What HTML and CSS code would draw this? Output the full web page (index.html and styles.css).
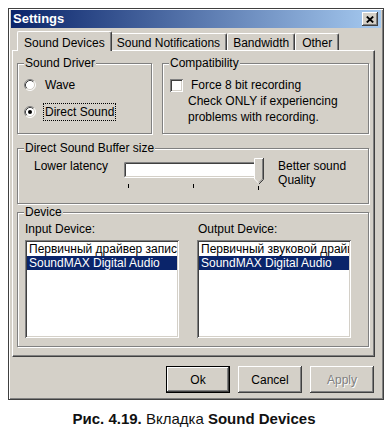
FILE: index.html
```html
<!DOCTYPE html>
<html>
<head>
<meta charset="utf-8">
<link rel="stylesheet" href="styles.css">
</head>
<body>
<div class="window">
  <div class="titlebar">
    <span class="title">Settings</span>
    <span class="close"><svg width="8" height="7" viewBox="0 0 8 7"><path d="M0.8 0.6L7.2 6.4M7.2 0.6L0.8 6.4" stroke="#000" stroke-width="1.9" fill="none"/></svg></span>
  </div>
  <div class="tabs">
    <div class="tab active">Sound Devices</div>
    <div class="tab">Sound Notifications</div>
    <div class="tab bw">Bandwidth</div>
    <div class="tab">Other</div>
  </div>
  <div class="panel">
    <div class="row1">
      <fieldset class="group driver">
        <legend>Sound Driver</legend>
        <div class="radio-row first">
          <svg class="radio" width="12" height="12" viewBox="0 0 12 12"><circle cx="6" cy="6" r="5" fill="#fff"/><path d="M2.11 9.89A5.5 5.5 0 0 1 9.89 2.11" stroke="#808080" fill="none"/><path d="M9.89 2.11A5.5 5.5 0 0 1 2.11 9.89" stroke="#fff" fill="none"/><path d="M2.82 9.18A4.5 4.5 0 0 1 9.18 2.82" stroke="#404040" fill="none"/><path d="M9.18 2.82A4.5 4.5 0 0 1 2.82 9.18" stroke="#d4d0c8" fill="none"/></svg>
          <span class="lbl">Wave</span>
        </div>
        <div class="radio-row second">
          <svg class="radio" width="12" height="12" viewBox="0 0 12 12"><circle cx="6" cy="6" r="5" fill="#fff"/><path d="M2.11 9.89A5.5 5.5 0 0 1 9.89 2.11" stroke="#808080" fill="none"/><path d="M9.89 2.11A5.5 5.5 0 0 1 2.11 9.89" stroke="#fff" fill="none"/><path d="M2.82 9.18A4.5 4.5 0 0 1 9.18 2.82" stroke="#404040" fill="none"/><path d="M9.18 2.82A4.5 4.5 0 0 1 2.82 9.18" stroke="#d4d0c8" fill="none"/><circle cx="6" cy="6" r="2" fill="#000"/></svg>
          <span class="lbl focus">Direct Sound</span>
        </div>
      </fieldset>
      <fieldset class="group compat">
        <legend>Compatibility</legend>
        <div class="check-row"><span class="checkbox"></span><span>Force 8 bit recording</span></div>
        <div class="note">Check ONLY if experiencing<br>problems with recording.</div>
      </fieldset>
    </div>
    <fieldset class="group buffer">
      <legend>Direct Sound Buffer size</legend>
      <div class="buffer-row">
        <span class="lat">Lower latency</span>
        <svg class="slider" width="142" height="34" viewBox="0 0 142 34">
          <rect x="1" y="4" width="135" height="16" fill="#fff"/>
          <path d="M1.5 19.5V4.5H135.5" stroke="#808080" fill="none"/>
          <path d="M2.5 18.5V5.5H134.5" stroke="#404040" fill="none"/>
          <path d="M1.5 19.5H135.5V4.5" stroke="#fff" fill="none"/>
          <path d="M2.5 18.5H134.5V5.5" stroke="#d4d0c8" fill="none"/>
          <polygon points="131,0 141,0 141,21 136,26 131,21" fill="#d4d0c8"/>
          <path d="M131.5 21V0.5H140" stroke="#fff" fill="none"/>
          <path d="M131.5 21L136 25.5" stroke="#fff" fill="none"/>
          <path d="M140.5 0V21.5L136 26" stroke="#404040" fill="none"/>
          <path d="M139.5 1V21L136 24.5" stroke="#808080" fill="none"/>
          <rect x="5" y="26" width="1" height="4" fill="#000"/>
          <rect x="70" y="26" width="1" height="4" fill="#000"/>
          <rect x="135" y="28" width="1" height="4" fill="#000"/>
        </svg>
        <span class="quality">Better sound<br>Quality</span>
      </div>
    </fieldset>
    <fieldset class="group device">
      <legend>Device</legend>
      <div class="dev-grid">
        <div class="dev-col">
          <div class="dev-label">Input Device:</div>
          <div class="listbox">
            <div class="item">Первичный драйвер записи звука</div>
            <div class="item sel">SoundMAX Digital Audio</div>
          </div>
        </div>
        <div class="dev-col">
          <div class="dev-label">Output Device:</div>
          <div class="listbox">
            <div class="item">Первичный звуковой драйвер</div>
            <div class="item sel">SoundMAX Digital Audio</div>
          </div>
        </div>
      </div>
    </fieldset>
  </div>
  <div class="buttons">
    <div class="btn default">Ok</div>
    <div class="btn">Cancel</div>
    <div class="btn disabled">Apply</div>
  </div>
</div>
<p class="caption"><b>Рис. 4.19.</b> Вкладка <b>Sound Devices</b></p>
</body>
</html>
```
FILE: styles.css
```css
* { box-sizing: border-box; }
body {
  margin: 0;
  background: #fff;
  font-family: "Liberation Sans", Arial, sans-serif;
  font-size: 12px;
  color: #000;
}
.window {
  margin: 8px 0 0 8px;
  width: 376px;
  border: 1px solid #404040;
  padding: 1px 2px 2px 2px;
  background: #d4d0c8;
  box-shadow: inset 1px 1px #fff, inset -1px -1px #808080;
}
.titlebar {
  height: 18px;
  display: flex;
  align-items: center;
  justify-content: space-between;
  padding: 0 3px 0 2px;
  background: linear-gradient(to right, #0a246a, #a6caf0);
}
.title {
  color: #fff;
  font-weight: bold;
  font-size: 13px;
  line-height: 16px;
}
.close {
  width: 16px;
  height: 14px;
  background: #d4d0c8;
  display: flex;
  align-items: center;
  justify-content: center;
  box-shadow: inset -1px -1px #404040, inset 1px 1px #fff, inset -2px -2px #808080, inset 2px 2px #d4d0c8;
}
.tabs {
  display: flex;
  align-items: flex-end;
  height: 19px;
  margin-top: 3px;
  padding-left: 8px;
}
.tab {
  height: 17px;
  padding: 2px 6px 0;
  line-height: 14px;
  border: 1px solid;
  border-color: #fff #404040 transparent #fff;
  border-bottom: 0;
  border-radius: 2px 2px 0 0;
  box-shadow: inset -1px 0 #808080;
  white-space: nowrap;
}
.tab.bw { padding: 2px 5px 0; }
.tab.active {
  height: 20px;
  margin: 0 -2px -1px;
  padding-top: 4px;
  background: #d4d0c8;
  position: relative;
  z-index: 2;
}
.panel {
  margin-left: 1px;
  width: 363px;
  border: 1px solid;
  border-color: #fff #404040 #404040 #fff;
  box-shadow: inset -1px -1px #808080;
  padding: 5px 5px 9px 4px;
}
.row1 {
  display: flex;
  gap: 10px;
}
.group {
  margin: 0;
  padding: 0;
  min-width: 0;
  border: 1px solid #808080;
  box-shadow: inset 1px 1px #fff, 1px 1px #fff;
}
.group legend {
  margin-left: 6px;
  padding: 0 1px;
  line-height: 14px;
  background: #d4d0c8;
}
.driver { width: 135px; flex: none; }
.compat { flex: 1; padding-bottom: 8px; }
.radio-row {
  display: flex;
  align-items: center;
  height: 18px;
  padding-left: 6px;
}
.radio-row.first { margin-top: 6px; }
.radio-row.second { margin-top: 9px; }
.radio { flex: none; }
.lbl {
  margin-left: 7px;
  padding: 0 1px;
  line-height: 16px;
  border: 1px dotted transparent;
}
.lbl.focus { border-color: #000; }
.check-row {
  display: flex;
  align-items: center;
  height: 16px;
  margin-top: 7px;
  padding-left: 7px;
}
.checkbox {
  width: 13px;
  height: 13px;
  margin-right: 8px;
  background: #fff;
  box-shadow: inset 1px 1px #808080, inset -1px -1px #fff, inset 2px 2px #404040, inset -2px -2px #d4d0c8;
}
.note {
  margin-left: 25px;
  line-height: 16px;
}
.buffer { margin-top: 7px; }
.buffer-row {
  display: flex;
  align-items: flex-start;
  padding: 3px 0 11px 16px;
}
.lat { margin-top: 1px; line-height: 14px; }
.slider { display: block; margin-left: 15px; flex: none; }
.quality { margin-left: 13px; margin-top: 1px; line-height: 14px; }
.device { margin-top: 1px; }
.dev-grid {
  display: grid;
  grid-template-columns: 154px 154px;
  column-gap: 18px;
  padding: 3px 0 8px 7px;
}
.dev-label { line-height: 14px; margin-bottom: 4px; }
.dev-col:last-child .dev-label { padding-left: 1px; }
.listbox {
  height: 98px;
  background: #fff;
  padding: 2px;
  box-shadow: inset 1px 1px #808080, inset -1px -1px #fff, inset 2px 2px #404040, inset -2px -2px #d4d0c8;
  overflow: hidden;
}
.item {
  height: 14px;
  line-height: 14px;
  padding-left: 2px;
  white-space: nowrap;
  overflow: hidden;
}
.item.sel { background: #0a246a; color: #fff; }
.buttons {
  display: flex;
  justify-content: flex-end;
  gap: 8px;
  margin: 9px 7px 4px 0;
}
.btn {
  width: 64px;
  height: 27px;
  display: flex;
  align-items: center;
  justify-content: center;
  box-shadow: inset -1px -1px #404040, inset 1px 1px #fff, inset -2px -2px #808080, inset 2px 2px #d4d0c8;
}
.btn.default { border: 1px solid #000; }
.btn.disabled { color: #808080; text-shadow: 1px 1px #fff; }
.caption {
  margin: 10px 0 0;
  text-align: center;
  font-size: 15px;
  line-height: 18px;
  color: #111;
}
```
